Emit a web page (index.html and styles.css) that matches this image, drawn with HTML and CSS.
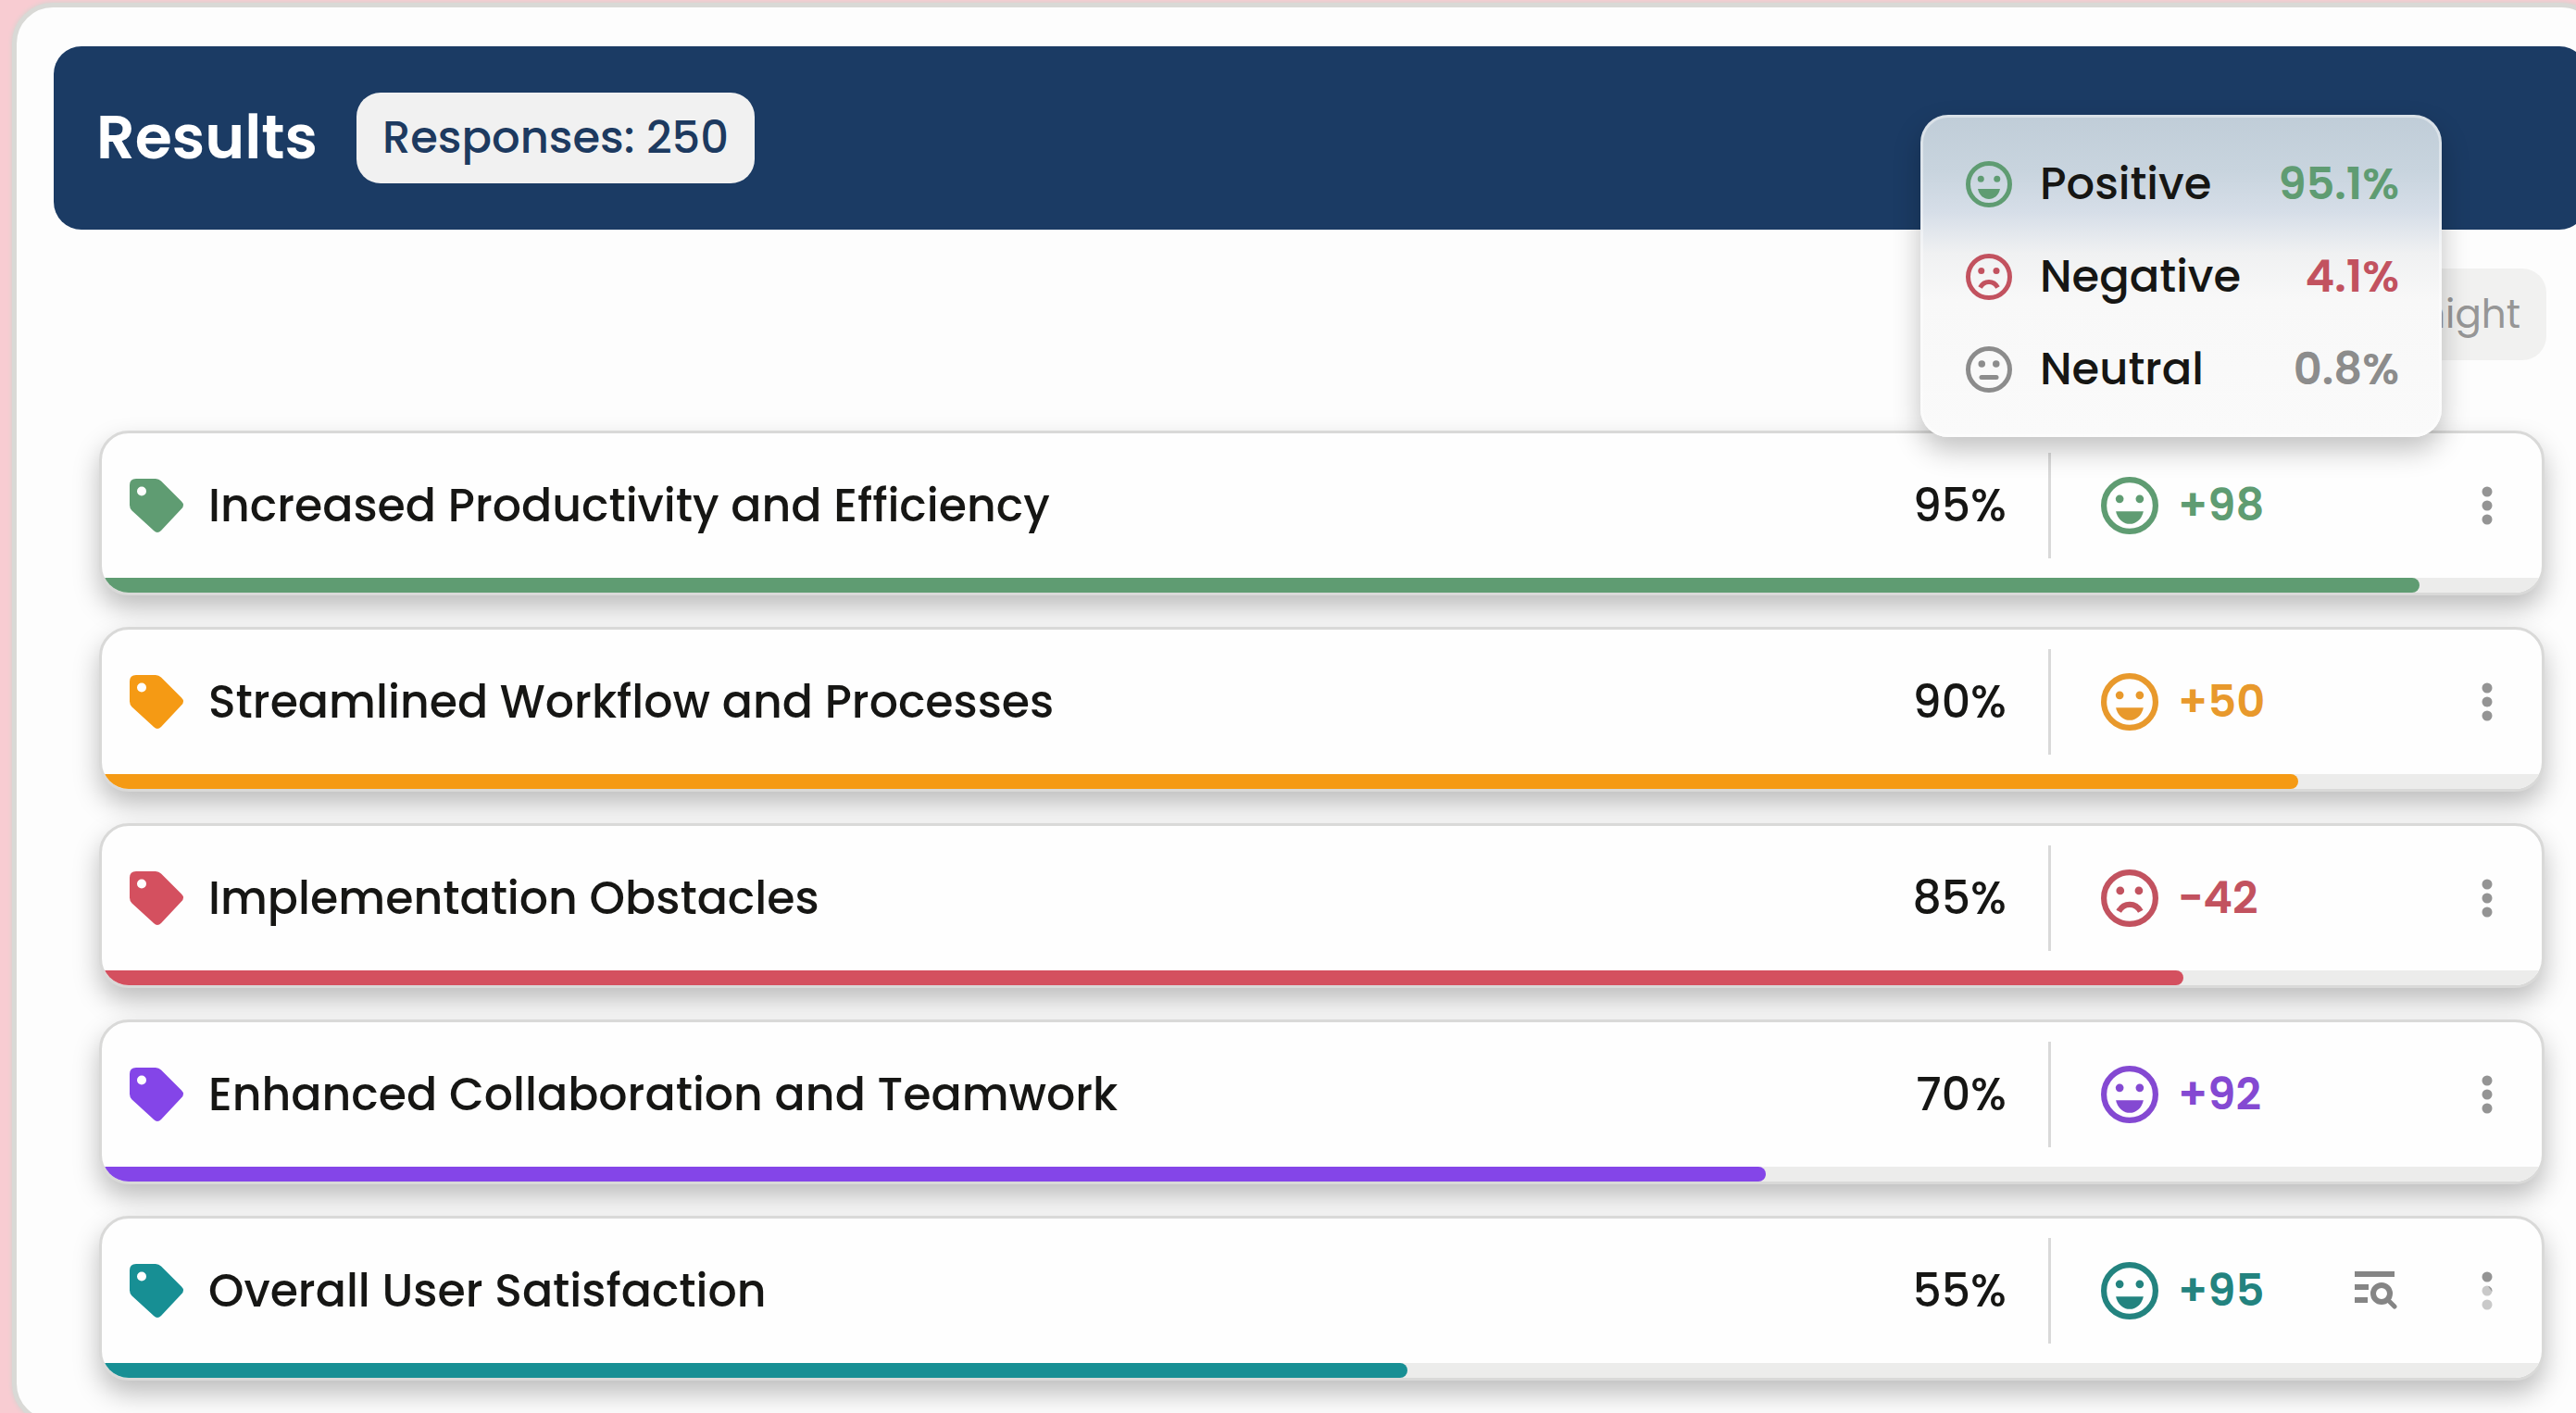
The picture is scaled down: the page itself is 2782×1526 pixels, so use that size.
FILE: index.html
```html
<!DOCTYPE html>
<html lang="en">
<head>
    <meta charset="UTF-8">
    <meta name="viewport" content="width=device-width, initial-scale=1.0">
    <title>Results</title>
    <link rel="stylesheet" href="styles.css">
</head>
<body>
    <!-- Shared icons -->
    <svg class="sprite" aria-hidden="true">
        <symbol id="icon-tag" viewBox="0 0 58 58">
            <path fill-rule="evenodd" d="M7 0H28Q31.500 0 34 2.500L56 24.500Q60 28.500 56 32.500L34 56Q30 60 26 56L2.500 34.500Q0 32 0 28.500V7Q0 0 7 0ZM13 8.500A5 5 0 1 0 13 18.500A5 5 0 1 0 13 8.500Z"/>
        </symbol>
        <symbol id="icon-happy" viewBox="2 2 20 20">
            <circle cx="12" cy="12" r="9" fill="none" stroke="currentColor" stroke-width="2"/>
            <circle cx="8.500" cy="9.700" r="1.400"/>
            <circle cx="15.500" cy="9.700" r="1.400"/>
            <path d="M7.200 14H16.800C16.200 16.800 14.200 18.400 12 18.400S7.800 16.800 7.200 14Z"/>
        </symbol>
        <symbol id="icon-sad" viewBox="2 2 20 20">
            <circle cx="12" cy="12" r="9" fill="none" stroke="currentColor" stroke-width="2"/>
            <circle cx="8.700" cy="9.400" r="1.400"/>
            <circle cx="15.200" cy="9.400" r="1.400"/>
            <path d="M8.200 16.600Q9.500 14.200 12 14.200T15.800 16.600" fill="none" stroke="currentColor" stroke-width="2"/>
        </symbol>
        <symbol id="icon-neutral" viewBox="2 2 20 20">
            <circle cx="12" cy="12" r="9" fill="none" stroke="currentColor" stroke-width="2"/>
            <circle cx="8.900" cy="9.600" r="1.500"/>
            <circle cx="15.100" cy="9.600" r="1.500"/>
            <rect x="7.800" y="14.400" width="8.400" height="2" rx="1"/>
        </symbol>
        <symbol id="icon-search" viewBox="0 0 46 42">
            <path d="M0 0H43V6H0ZM0 14H15V20H0ZM0 28H14V34H0Z"/>
            <circle cx="29" cy="24" r="9" fill="none" stroke="currentColor" stroke-width="6"/>
            <path d="M36 31L43 38" fill="none" stroke="currentColor" stroke-width="5" stroke-linecap="round"/>
        </symbol>
        <symbol id="icon-dots" viewBox="0 0 12 42">
            <circle cx="6" cy="6" r="5.500"/>
            <circle cx="6" cy="21" r="5.500"/>
            <circle cx="6" cy="36" r="5.500"/>
        </symbol>
    </svg>

    <main class="panel">
        <header class="panel-header">
            <h1>Results</h1>
            <span class="responses">Responses: 250</span>
        </header>

        <div class="toolbar">
            <button class="period" type="button" disabled>Fortnight</button>
        </div>

        <ul class="topics">
            <li class="topic green">
                <div class="topic-row">
                    <svg class="tag"><use href="#icon-tag"/></svg>
                    <span class="name">Increased Productivity and Efficiency</span>
                    <span class="percent">95%</span>
                    <span class="score"><svg class="face"><use href="#icon-happy"/></svg>+98</span>
                    <button class="menu" type="button" aria-label="More options"><svg class="dots"><use href="#icon-dots"/></svg></button>
                </div>
                <div class="bar"><div class="fill" style="width: 95%"></div></div>
            </li>
            <li class="topic orange">
                <div class="topic-row">
                    <svg class="tag"><use href="#icon-tag"/></svg>
                    <span class="name">Streamlined Workflow and Processes</span>
                    <span class="percent">90%</span>
                    <span class="score"><svg class="face"><use href="#icon-happy"/></svg>+50</span>
                    <button class="menu" type="button" aria-label="More options"><svg class="dots"><use href="#icon-dots"/></svg></button>
                </div>
                <div class="bar"><div class="fill" style="width: 90%"></div></div>
            </li>
            <li class="topic red">
                <div class="topic-row">
                    <svg class="tag"><use href="#icon-tag"/></svg>
                    <span class="name">Implementation Obstacles</span>
                    <span class="percent">85%</span>
                    <span class="score"><svg class="face"><use href="#icon-sad"/></svg>−42</span>
                    <button class="menu" type="button" aria-label="More options"><svg class="dots"><use href="#icon-dots"/></svg></button>
                </div>
                <div class="bar"><div class="fill" style="width: 85.300%"></div></div>
            </li>
            <li class="topic purple">
                <div class="topic-row">
                    <svg class="tag"><use href="#icon-tag"/></svg>
                    <span class="name">Enhanced Collaboration and Teamwork</span>
                    <span class="percent">70%</span>
                    <span class="score"><svg class="face"><use href="#icon-happy"/></svg>+92</span>
                    <button class="menu" type="button" aria-label="More options"><svg class="dots"><use href="#icon-dots"/></svg></button>
                </div>
                <div class="bar"><div class="fill" style="width: 68.200%"></div></div>
            </li>
            <li class="topic teal">
                <div class="topic-row">
                    <svg class="tag"><use href="#icon-tag"/></svg>
                    <span class="name">Overall User Satisfaction</span>
                    <span class="percent">55%</span>
                    <span class="score"><svg class="face"><use href="#icon-happy"/></svg>+95</span>
                    <button class="search" type="button" aria-label="Search responses"><svg><use href="#icon-search"/></svg></button>
                    <button class="menu" type="button" aria-label="More options">
                        <svg class="dots" viewBox="0 0 12 42">
                            <circle cx="6" cy="6" r="5.500"/>
                            <circle class="dim" cx="6" cy="21" r="5.500"/>
                            <path d="M7 16A5.500 5.500 0 0 1 11.400 22Z"/>
                            <circle class="dim" cx="6" cy="36" r="5.500"/>
                        </svg>
                    </button>
                </div>
                <div class="bar"><div class="fill" style="width: 53.500%"></div></div>
            </li>
        </ul>

        <!-- Sentiment breakdown over the first score -->
        <dl class="tooltip">
            <div class="tooltip-row positive">
                <svg><use href="#icon-happy"/></svg>
                <dt>Positive</dt>
                <dd>95.1%</dd>
            </div>
            <div class="tooltip-row negative">
                <svg><use href="#icon-sad"/></svg>
                <dt>Negative</dt>
                <dd>4.1%</dd>
            </div>
            <div class="tooltip-row neutral">
                <svg><use href="#icon-neutral"/></svg>
                <dt>Neutral</dt>
                <dd>0.8%</dd>
            </div>
        </dl>
    </main>
</body>
</html>
```
FILE: styles.css
```css
* {
    box-sizing: border-box;
}
html {
    overflow: hidden;
}
body {
    margin: 0;
    padding: 3px 0 0 13px;
    background-color: #f8ccd2;
    font-family: Poppins, Inter, sans-serif;
    font-size: 48px;
    font-weight: 500;
    line-height: 72px;
    color: #161614;
}
svg {
    display: block;
    flex: none;
    fill: currentColor;
}
button {
    font: inherit;
    border: none;
    padding: 0;
    background: none;
    cursor: pointer;
}
.sprite {
    position: absolute;
    width: 0;
    height: 0;
}

/* Panel */
.panel {
    position: relative;
    margin-right: -28px;
    padding: 42px 11px 42px 40px;
    background-color: #fdfdfd;
    border: 5px solid #d9d9d6;
    border-radius: 44px;
    box-shadow: 0 0 4px 1px #d9d3d0;
}
.panel-header {
    display: flex;
    align-items: center;
    gap: 42px;
    height: 198px;
    padding: 0 46px;
    background-color: #1b3b64;
    border-radius: 30px;
}
.panel-header h1 {
    margin: 0;
    font-size: 65px;
    font-weight: 600;
    line-height: 98px;
    color: #fff;
}
.responses {
    padding: 13px 28px;
    background-color: #f1f1f1;
    border-radius: 26px;
    color: #1d3a60;
}
.toolbar {
    display: flex;
    justify-content: flex-end;
    padding: 42px 44px 76px;
}
.period {
    height: 99px;
    padding: 0 28px;
    background-color: #f1f1f0;
    border-radius: 26px;
    font-size: 42px;
    font-weight: 400;
    color: #969696;
}

/* Topics */
.topics {
    display: flex;
    flex-direction: column;
    gap: 34px;
    margin: 0;
    padding: 0 46px 0 49px;
    list-style: none;
}
.topic {
    overflow: hidden;
    background-color: #fefefe;
    border: 3px solid #d9d9d8;
    border-radius: 32px;
    box-shadow: 0 14px 28px rgba(0, 0, 0, 0.25);
}
.topic-row {
    display: flex;
    align-items: center;
    height: 156px;
    padding: 0 29px;
}
.tag {
    width: 60px;
    height: 58px;
    margin-right: 26px;
    color: var(--color);
}
.name {
    flex: 1;
    font-size: 49px;
}
.percent {
    margin-right: 45px;
    font-size: 49px;
}
.score {
    display: flex;
    align-items: center;
    gap: 21px;
    width: 331px;
    height: 114px;
    margin-right: 113px;
    padding-left: 54px;
    border-left: 3px solid #d9d9d9;
    font-weight: 600;
    color: var(--text);
}
.face {
    width: 62px;
    height: 62px;
}
.search {
    margin-left: -113px;
    margin-right: 67px;
    color: #858585;
}
.search svg {
    width: 46px;
    height: 42px;
}
.menu {
    display: flex;
    justify-content: center;
    width: 60px;
    color: #949494;
}
.dots {
    width: 12px;
    height: 42px;
}
.dim {
    fill: #c9c9c9;
}
.bar {
    height: 16px;
    background-color: #ececeb;
}
.fill {
    height: 100%;
    background-color: var(--color);
    border-radius: 0 8px 8px 0;
}
.green {
    --color: #5f9c72;
    --text: #5f9c72;
}
.orange {
    --color: #f59a14;
    --text: #e8992c;
}
.red {
    --color: #d4505f;
    --text: #c2525f;
}
.purple {
    --color: #8445e8;
    --text: #8449d2;
}
.teal {
    --color: #178f94;
    --text: #23837f;
}

/* Tooltip */
.tooltip {
    position: absolute;
    top: 116px;
    right: 168px;
    width: 563px;
    margin: 0;
    padding: 22px 43px 20px 46px;
    background: linear-gradient(#c0cdd8, #c8d4de 60px, #d6dee8 105px, #f0f1f2 150px, #f8f8f8 200px, #fafafa) border-box;
    border: 3px solid rgba(255, 255, 255, 0.4);
    border-radius: 30px;
    box-shadow: 0 14px 30px rgba(0, 0, 0, 0.24);
}
.tooltip-row {
    display: flex;
    align-items: center;
    height: 100px;
}
.tooltip-row svg {
    width: 50px;
    height: 50px;
    margin-right: 30px;
    color: var(--color);
}
.tooltip-row dt {
    flex: 1;
}
.tooltip-row dd {
    margin: 0;
    font-weight: 600;
    color: var(--color);
}
.positive {
    --color: #5f9c72;
}
.negative {
    --color: #c2525f;
}
.neutral {
    --color: #8c8c8c;
}
```
